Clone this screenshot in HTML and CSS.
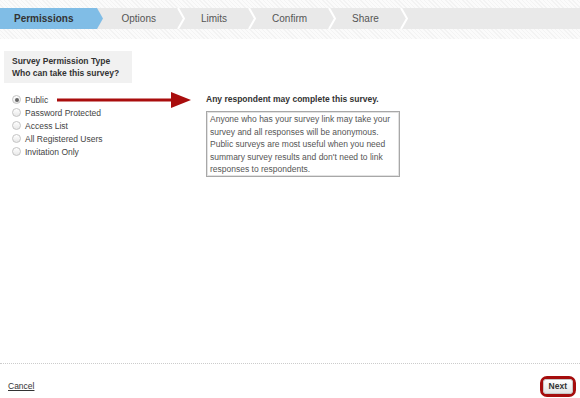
FILE: index.html
```html
<!DOCTYPE html>
<html lang="en">
<head>
  <meta charset="UTF-8">
  <meta name="viewport" content="width=device-width, initial-scale=1.0">
  <title>Survey Permissions</title>
  <link rel="stylesheet" href="styles.css">
</head>
<body>
  <header class="wizard">
    <nav class="steps">
      <span class="step active">Permissions</span>
      <svg class="chevron" viewBox="0 0 8 21"><polygon class="fill" points="0,0 6,10.5 0,21"/></svg>
      <span class="step">Options</span>
      <svg class="chevron" viewBox="0 0 8 21"><polyline points="1,0 7,10.5 1,21"/></svg>
      <span class="step">Limits</span>
      <svg class="chevron" viewBox="0 0 8 21"><polyline points="1,0 7,10.5 1,21"/></svg>
      <span class="step">Confirm</span>
      <svg class="chevron" viewBox="0 0 8 21"><polyline points="1,0 7,10.5 1,21"/></svg>
      <span class="step">Share</span>
      <svg class="chevron" viewBox="0 0 8 21"><polyline points="1,0 7,10.5 1,21"/></svg>
    </nav>
  </header>

  <main class="content">
    <section class="choices">
      <div class="question">
        <div>Survey Permission Type</div>
        <div>Who can take this survey?</div>
      </div>
      <ul class="options">
        <li class="option checked">
          <span class="radio"></span>Public
          <svg class="pointer" viewBox="0 0 134 18"><rect x="0" y="7.5" width="116" height="3"/><polygon points="114,1 134,9 114,17"/></svg>
        </li>
        <li class="option"><span class="radio"></span>Password Protected</li>
        <li class="option"><span class="radio"></span>Access List</li>
        <li class="option"><span class="radio"></span>All Registered Users</li>
        <li class="option"><span class="radio"></span>Invitation Only</li>
      </ul>
    </section>
    <section class="details">
      <h3>Any respondent may complete this survey.</h3>
      <p class="info">Anyone who has your survey link may take your survey and all responses will be anonymous. Public surveys are most useful when you need summary survey results and don't need to link responses to respondents.</p>
    </section>
  </main>

  <footer class="actions">
    <a class="cancel" href="#">Cancel</a>
    <span class="highlight"><button class="next">Next</button></span>
  </footer>
</body>
</html>
```

FILE: styles.css
```css
* {
  padding: 0;
  margin: 0;
  box-sizing: border-box;
}

body {
  display: flex;
  flex-direction: column;
  min-height: 100vh;
  background: #fff;
  font-family: "Liberation Sans", Arial, sans-serif;
  font-size: 8.5px;
  color: #444;
}

.wizard {
  padding: 8px 0 10px;
  background: repeating-linear-gradient(45deg, #f3f3f3 0 1px, #fbfbfb 1px 3px);
}

.steps {
  display: flex;
  height: 21px;
  background: #e9e9e9;
}

.step {
  display: flex;
  align-items: center;
  padding: 0 21px 0 16px;
  font-size: 10px;
  color: #555;
}

.step.active {
  padding: 0 24px 0 14px;
  background: #80bde6;
  font-weight: bold;
  color: #333;
}

.chevron {
  width: 8px;
  height: 21px;
  flex: none;
}

.chevron polyline {
  fill: none;
  stroke: #fff;
  stroke-width: 2;
}

.chevron .fill {
  fill: #80bde6;
}

.content {
  flex: 1;
  display: flex;
  padding-top: 12px;
}

.choices {
  width: 206px;
  flex: none;
}

.question {
  width: 128px;
  margin-left: 4px;
  padding: 4px 8px;
  background: #f1f1f1;
  font-weight: bold;
  line-height: 12px;
  color: #333;
}

.options {
  list-style: none;
  margin-top: 10px;
  padding-left: 12px;
}

.option {
  position: relative;
  display: flex;
  align-items: center;
  height: 13px;
}

.radio {
  display: inline-flex;
  align-items: center;
  justify-content: center;
  width: 9px;
  height: 9px;
  margin-right: 4px;
  border: 1px solid #c4c4c4;
  border-radius: 50%;
  background: linear-gradient(#fff, #e8e8e8);
}

.checked .radio::after {
  content: '';
  width: 4px;
  height: 4px;
  border-radius: 50%;
  background: #666;
}

.pointer {
  position: absolute;
  left: 45px;
  top: -2px;
  width: 134px;
  height: 18px;
  fill: #a90d0d;
}

.details {
  padding-top: 42px;
}

.details h3 {
  font-size: 8.5px;
  line-height: 13px;
  color: #333;
}

.info {
  width: 194px;
  margin-top: 5px;
  padding: 1px 3px 0;
  border: 1px solid #a8a8a8;
  box-shadow: inset 0 0 0 1px #e2e2e2;
  line-height: 12.6px;
  color: #555;
}

.actions {
  display: flex;
  justify-content: space-between;
  align-items: center;
  height: 35px;
  padding: 11px 4px 1px 8px;
  border-top: 1px dotted #ccc;
}

.cancel {
  color: #333;
}

.highlight {
  display: flex;
  border: 3px solid #a50d0d;
  border-radius: 7px;
}

.next {
  height: 15px;
  padding: 0 5px;
  border: 1px solid #c6c6c6;
  border-radius: 3px;
  background: linear-gradient(#fff, #e4e4e4);
  font-family: inherit;
  font-size: 8.5px;
  font-weight: bold;
  color: #333;
}
```
